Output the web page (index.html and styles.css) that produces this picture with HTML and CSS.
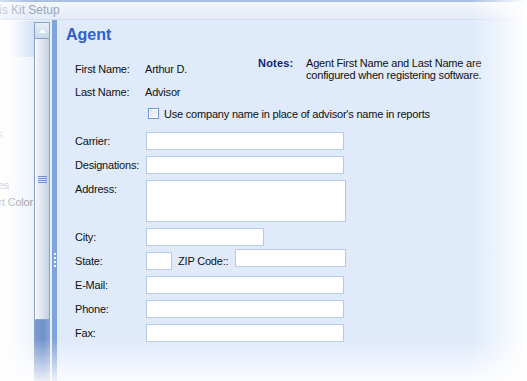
FILE: index.html
```html
<!DOCTYPE html>
<html lang="en">
<head>
    <meta charset="UTF-8">
    <meta name="viewport" content="width=device-width, initial-scale=1.0">
    <title>Kit Setup - Agent</title>
    <link rel="stylesheet" href="styles.css">
</head>
<body>
    <div class="window">
        <div class="titlebar"><span class="title">is Kit Setup</span></div>
        <div class="workspace">
            <div class="tree">
                <div class="tree-head"></div>
                <div class="tree-item item-a"><span>Disclosures</span></div>
                <div class="tree-item item-b"><span>Report Styles</span></div>
                <div class="tree-item item-c"><span>Chart Color</span></div>
            </div>
            <div class="scrollbar">
                <div class="scroll-up">
                    <svg width="7" height="4" viewBox="0 0 7 4"><path d="M0 4 L3.5 0 L7 4 Z" fill="#ffffff"/></svg>
                </div>
                <div class="scroll-thumb"><span class="grip"></span></div>
                <div class="scroll-track"></div>
            </div>
            <div class="gutter"></div>
            <div class="splitter"><span class="dots"></span></div>

            <div class="panel">
                <h1>Agent</h1>
                <div class="info">
                    <div class="names">
                        <div class="name-row"><span class="label">First Name:</span><span>Arthur D.</span></div>
                        <div class="name-row"><span class="label">Last Name:</span><span>Advisor</span></div>
                        <label class="check-row"><span class="checkbox"></span>Use company name in place of advisor's name in reports</label>
                    </div>
                    <div class="notes">
                        <strong>Notes:</strong>
                        <p>Agent First Name and Last Name are<br>configured when registering software.</p>
                    </div>
                </div>

                <div class="agent-form">
                    <span class="label">Carrier:</span>
                    <input type="text" class="field wide">
                    <span class="label">Designations:</span>
                    <input type="text" class="field wide">
                    <span class="label top">Address:</span>
                    <textarea class="field address"></textarea>
                    <span class="label">City:</span>
                    <input type="text" class="field city">
                    <span class="label">State:</span>
                    <div class="zip-row">
                        <input type="text" class="field state">
                        <span class="zip-label">ZIP Code::</span>
                        <input type="text" class="field zip">
                    </div>
                    <span class="label">E-Mail:</span>
                    <input type="text" class="field wide">
                    <span class="label">Phone:</span>
                    <input type="text" class="field wide">
                    <span class="label">Fax:</span>
                    <input type="text" class="field wide">
                </div>
            </div>
        </div>

        <!-- soft edges of the screenshot -->
        <div class="fade fade-left"></div>
        <div class="fade fade-right"></div>
        <div class="fade fade-bottom"></div>
    </div>
</body>
</html>
```

FILE: styles.css
```css
body {
    margin: 0;
    background-color: #ffffff;
    font-family: "Liberation Sans", Arial, sans-serif;
    font-size: 11px;
    letter-spacing: -0.2px;
    color: #111111;
}

.window {
    position: relative;
    width: 527px;
    height: 381px;
    overflow: hidden;
    background-color: #dfeafb;
}

/* title bar */
.titlebar {
    height: 17px;
    border-top: 2px solid #a9c0e5;
    border-bottom: 1px solid #d3dff1;
    background: linear-gradient(#f2f6fc, #e3ebf8);
}

.title {
    display: block;
    margin-left: -1px;
    font-size: 12px;
    letter-spacing: 0;
    line-height: 16px;
    color: #98a5bb;
}

.workspace {
    display: flex;
    height: 361px;
}

/* left tree, scrolled so only the ends of the names show */
.tree {
    width: 34px;
    padding-top: 1px;
    overflow: hidden;
    background: linear-gradient(to right, #ffffff, #edf3fb);
}

.tree-head {
    height: 36px;
    background: linear-gradient(to right, #ffffff 15%, #d3e2f5);
}

.tree-item {
    display: flex;
    justify-content: flex-end;
    height: 17px;
    line-height: 17px;
    white-space: nowrap;
    overflow: hidden;
}

.item-a {
    margin-top: 69px;
    padding-right: 31px;
    color: #c4c9d0;
}

.item-b {
    margin-top: 34px;
    padding-right: 25px;
    color: #adb3bc;
}

.item-c {
    padding-right: 1px;
    color: #9aa0a9;
}

/* scrollbar */
.scrollbar {
    display: flex;
    flex-direction: column;
    width: 16px;
    margin-top: 2px;
    box-sizing: border-box;
    border-left: 1px solid #8aa1c4;
    border-right: 1px solid #8aa1c4;
    border-top: 1px solid #8aa1c4;
}

.scroll-up {
    display: flex;
    justify-content: center;
    align-items: center;
    height: 15px;
    border-bottom: 1px solid #8aa1c4;
    background: linear-gradient(#e6eef8, #c9d8ec);
}

.scroll-thumb {
    display: flex;
    justify-content: center;
    align-items: center;
    height: 280px;
    border-left: 1px solid #ffffff;
    border-bottom: 1px solid #8aa1c4;
    background: linear-gradient(to right, #f2f5f9, #e0e7f0 40%, #c4d2e3);
}

.grip {
    width: 9px;
    height: 7px;
    background: repeating-linear-gradient(#6d8fca 0 1px, transparent 1px 2px);
}

.scroll-track {
    flex: 1;
    background: linear-gradient(to right, #7c9dd3, #6f92cc 60%, #84a3d6);
}

.gutter {
    width: 2px;
    background-color: #e7eff9;
}

.splitter {
    width: 5px;
    background-color: #7fa3dd;
}

.dots {
    display: block;
    width: 2px;
    height: 14px;
    margin: 233px 0 0 2px;
    background: repeating-linear-gradient(#ffffff 0 2px, transparent 2px 4px);
}

/* main panel */
.panel {
    flex: 1;
    padding: 5px 0 0 9px;
}

h1 {
    margin: 0;
    font-size: 16px;
    line-height: 19px;
    letter-spacing: 0;
    color: #2c60cf;
}

.info {
    display: flex;
    padding: 13px 0 0 9px;
}

.names {
    width: 183px;
    padding-top: 6px;
}

.name-row {
    display: flex;
    height: 13px;
    line-height: 13px;
    margin-bottom: 10px;
}

.label {
    width: 70px;
}

.check-row {
    display: flex;
    align-items: center;
    margin: -2px 0 0 73px;
    height: 13px;
    white-space: nowrap;
}

.checkbox {
    flex-shrink: 0;
    width: 9px;
    height: 9px;
    margin-right: 5px;
    border: 1px solid #6f96d6;
    background: linear-gradient(135deg, #dfe3ea, #f6f7f9);
    box-shadow: inset 0 0 0 1px #ffffff;
}

.notes {
    display: flex;
    line-height: 12px;
}

.notes strong {
    width: 48px;
    color: #0e1f7c;
    letter-spacing: 0.2px;
}

.notes p {
    margin: 0;
}

/* form */
.agent-form {
    display: grid;
    grid-template-columns: 71px auto;
    row-gap: 6px;
    align-items: center;
    margin-top: 12px;
    padding-left: 9px;
}

.agent-form .label {
    line-height: 13px;
}

.agent-form .label.top {
    align-self: start;
    padding-top: 3px;
}

.field {
    height: 18px;
    margin: 0;
    padding: 0 2px;
    box-sizing: border-box;
    border: 1px solid #b8cbe6;
    background-color: #ffffff;
    font: inherit;
    outline: none;
}

.wide {
    width: 198px;
}

.address {
    width: 200px;
    height: 42px;
    resize: none;
}

.city {
    width: 118px;
}

.zip-row {
    display: flex;
    align-items: center;
}

.state {
    width: 26px;
}

.zip-label {
    margin: 0 6px 0 6px;
    width: 51px;
}

.zip {
    width: 111px;
    margin-top: -6px;
}

/* feathered edges of the screenshot */
.fade {
    position: absolute;
    pointer-events: none;
}

.fade-left {
    top: 0;
    left: 0;
    width: 30px;
    height: 100%;
    background: linear-gradient(to right, rgba(255, 255, 255, 0.5), rgba(255, 255, 255, 0));
}

.fade-right {
    top: 0;
    right: 0;
    width: 56px;
    height: 100%;
    background: linear-gradient(to right, rgba(255, 255, 255, 0), rgba(255, 255, 255, 0.55) 55%, #ffffff);
}

.fade-bottom {
    left: 0;
    bottom: 0;
    width: 100%;
    height: 42px;
    background: linear-gradient(rgba(255, 255, 255, 0), rgba(255, 255, 255, 0.85));
}
```
